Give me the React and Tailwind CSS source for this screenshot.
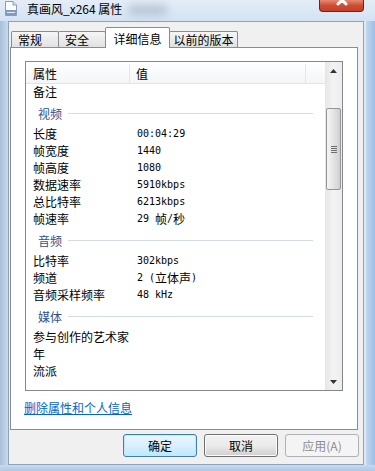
import React from "react"

const video = [
  ["长度", "00:04:29"],
  ["帧宽度", "1440"],
  ["帧高度", "1080"],
  ["数据速率", "5910kbps"],
  ["总比特率", "6213kbps"],
  ["帧速率", "29 帧/秒"],
]
const audio = [
  ["比特率", "302kbps"],
  ["频道", "2 (立体声)"],
  ["音频采样频率", "48 kHz"],
]
const media = [
  ["参与创作的艺术家", ""],
  ["年", ""],
  ["流派", ""],
]

// SimSun-like mix: ascii half width, cjk full width
function Value({ text }) {
  const parts = text.split(/([\u4e00-\u9fff]+)/).filter(Boolean)
  return (
    <span className="flex items-center whitespace-pre">
      {parts.map((p, i) =>
        /[\u4e00-\u9fff]/.test(p) ? (
          <span key={i} className="text-[12px]">{p}</span>
        ) : (
          <span key={i} className="font-['DejaVu_Sans_Mono',monospace] text-[10px]">{p}</span>
        )
      )}
    </span>
  )
}

function Row({ name, value }) {
  return (
    <div className="h-[17px] flex items-center text-[12px] leading-[17px] text-black">
      <div className="w-[111px] pl-[7px] whitespace-nowrap">{name}</div>
      {value && <Value text={value} />}
    </div>
  )
}

function Group({ title }) {
  return (
    <div className="h-[25px] pt-[5px] pl-[12px]">
      <div className="h-[17px] w-[275px] flex items-center gap-[6px]">
        <span className="text-[12px] leading-[17px] text-[#34508c]">{title}</span>
        <div className="flex-1 h-px bg-[#d3dbe3]" />
      </div>
    </div>
  )
}

function Tab({ label, selected, w, pad }) {
  if (selected) {
    return (
      <div className={`relative z-10 -ml-px -mb-px h-[21px] ${w} bg-white border border-b-0 border-[#898c95] rounded-t-[2px] flex items-center justify-center text-[12px] leading-[17px]`}>
        {label}
      </div>
    )
  }
  return (
    <div className={`-ml-px first:ml-0 h-[16px] ${w} ${pad} bg-gradient-to-b from-[#f6f6f6] to-[#e1e1e1] border border-b-0 border-[#898c95] rounded-t-[2px] flex items-center text-[12px] leading-[16px]`}>
      {label}
    </div>
  )
}

function Scrollbar() {
  return (
    <div className="w-[17px] flex flex-col bg-gradient-to-r from-[#e6e6e6] via-[#f3f3f3] to-[#ececec]">
      <div className="h-[17px] flex items-center justify-center">
        <svg width="7" height="4" viewBox="0 0 7 4"><path d="M0 4 L3.5 0 L7 4 Z" fill="#333" /></svg>
      </div>
      <div className="flex-1">
        <div className="mt-[29px] mx-[1px] h-[82px] rounded-[2px] border border-[#959595] bg-gradient-to-r from-[#f5f5f5] via-[#e4e4e4] to-[#cfcfcf] flex flex-col items-center justify-center gap-[1px]">
          {[0, 1, 2, 3].map((i) => (
            <div key={i} className="w-[6px] h-px bg-[#6f6f6f]" />
          ))}
        </div>
      </div>
      <div className="h-[17px] flex items-center justify-center">
        <svg width="7" height="4" viewBox="0 0 7 4"><path d="M0 0 L7 0 L3.5 4 Z" fill="#333" /></svg>
      </div>
    </div>
  )
}

function ListView() {
  return (
    <div className="ml-[14px] mt-[13px] w-[318px] h-[330px] border border-[#828790] bg-white flex">
      <div className="w-[299px] flex flex-col">
        <div className="h-[22px] border-b border-[#e2e4e8] bg-gradient-to-b from-white to-[#f3f5f7] flex text-[12px] leading-[17px] pt-[2px]">
          <div className="w-[104px] pl-[7px] flex items-center border-r border-[#e3e6ea]">属性</div>
          <div className="w-[176px] pl-[6px] flex items-center border-r border-[#e3e6ea]">值</div>
        </div>
        <div className="h-[306px] overflow-hidden">
          <div className="h-[16px] overflow-hidden flex items-end text-[12px] leading-[17px]">
            <div className="pl-[7px]">备注</div>
          </div>
          <Group title="视频" />
          {video.map(([n, v]) => <Row key={n} name={n} value={v} />)}
          <Group title="音频" />
          {audio.map(([n, v]) => <Row key={n} name={n} value={v} />)}
          <Group title="媒体" />
          {media.map(([n, v]) => <Row key={n} name={n} value={v} />)}
        </div>
      </div>
      <Scrollbar />
    </div>
  )
}

function Button({ children, kind }) {
  const styles = {
    default: "border-[#3c7fb1] bg-gradient-to-b from-[#eaf6fd] via-[#d9f0fc] to-[#bee6fd] shadow-[inset_0_0_0_1px_#c6e6fb] text-black",
    normal: "border-[#707070] bg-gradient-to-b from-[#f2f2f2] via-[#ebebeb] to-[#cfcfcf] shadow-[inset_0_0_0_1px_#fcfcfc] text-black",
    disabled: "border-[#adb2b5] bg-[#f4f4f4] text-[#8d8d8d]",
  }
  return (
    <div className={`w-[74px] h-[23px] rounded-[3px] border flex items-center justify-center text-[12px] leading-[17px] ${styles[kind]}`}>
      {children}
    </div>
  )
}

export default function App() {
  return (
    <div className="w-[375px] h-[471px] flex flex-col overflow-hidden bg-[#bfd4eb] font-['Noto_Sans_CJK_SC',sans-serif] text-black">
      {/* title bar */}
      <div className="relative h-[21px] flex items-start bg-gradient-to-b from-[#e4edf7] to-[#d3e2f2]">
        <div className="absolute left-[128px] top-[5px] w-[40px] h-[10px] rounded-full bg-[#7f90a6] opacity-40 blur-[4px]" />
        <svg className="ml-[5px] mt-[1px]" width="12" height="15" viewBox="0 0 12 15">
          <path d="M0.5 0.5 H8 L11.5 4 V14.5 H0.5 Z" fill="#fbfcfe" stroke="#8a9bb3" />
          <path d="M8 0.5 V4 H11.5" fill="#dfe6f0" stroke="#8a9bb3" />
          <rect x="1" y="9" width="10" height="5" fill="#7d9cc4" />
          <rect x="2" y="11" width="8" height="1" fill="#e8eef7" />
        </svg>
        <span className="relative ml-[10px] text-[12px] leading-[17px]">真画风_x264 属性</span>
        <div className="ml-auto mr-[11px] w-[45px] h-[12px] rounded-b-[4px] border border-t-0 border-[#6b2416] bg-gradient-to-b from-[#e28a6f] via-[#cf4b33] to-[#c2402b] flex justify-center overflow-hidden">
          <svg width="12" height="12" viewBox="0 0 12 12" className="-mt-[6px]">
            <path d="M2 2 L10 10 M10 2 L2 10" stroke="white" strokeWidth="3" strokeLinecap="round" />
          </svg>
        </div>
      </div>

      <div className="flex flex-1">
        <div className="w-[8px] bg-gradient-to-r from-[#a9bfd8] to-[#c8d9ec]" />
        {/* client */}
        <div className="w-[356px] h-[444px] border border-[#8ea3bb] bg-[#f0f0f0] flex flex-col">
          <div className="pt-[5px] pl-[2px] h-[25px] flex items-end">
            <Tab label="常规" w="w-[48px]" pad="pl-[6px]" />
            <Tab label="安全" w="w-[48px]" pad="pl-[6px]" />
            <Tab label="详细信息" selected w="w-[65px]" />
            <Tab label="以前的版本" w="w-[69px]" pad="justify-center" />
          </div>
          <div className="ml-[1px] w-[348px] h-[383px] border border-[#898c95] bg-white">
            <ListView />
            <div className="mt-[8px] ml-[13px] text-[12px] leading-[17px] text-[#0066cc] underline">删除属性和个人信息</div>
          </div>
          <div className="mt-[4px] pr-[4px] flex justify-end gap-[7px]">
            <Button kind="default">确定</Button>
            <Button kind="normal">取消</Button>
            <Button kind="disabled">应用(A)</Button>
          </div>
        </div>
        <div className="flex-1 flex">
          <div className="w-[2px] bg-[#dbe8f5]" />
          <div className="flex-1 bg-gradient-to-r from-[#c3d8ee] via-[#aecbea] to-[#9fbfe2]" />
        </div>
      </div>
      <div className="h-[6px] bg-gradient-to-b from-[#c8daee] to-[#aec8e4]" />
    </div>
  )
}
